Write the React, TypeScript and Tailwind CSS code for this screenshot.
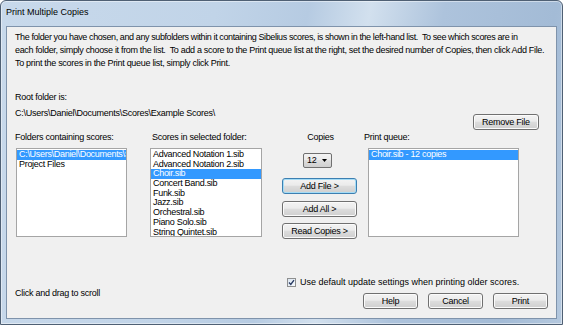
import type { ReactNode } from 'react'

const sans = "font-['Liberation_Sans',Arial,sans-serif]"

function WinButton({ children, className = '', focused = false }: { children: ReactNode; className?: string; focused?: boolean }) {
  return (
    <button
      type="button"
      className={`flex h-[16px] items-center justify-center rounded-[3px] border text-[9px] leading-none text-black bg-[linear-gradient(#f3f3f3_0%,#ebebeb_45%,#dddddd_50%,#cfcfcf_100%)] ${
        focused ? 'border-[#3c7fb1] shadow-[inset_0_0_0_1px_#a4dcf6]' : 'border-[#707070] shadow-[inset_0_0_0_1px_#fbfbfb]'
      } ${className}`}
    >
      {children}
    </button>
  )
}

function ListBox({ items, selected, className = '' }: { items: string[]; selected: number; className?: string }) {
  return (
    <div className={`h-[89px] overflow-hidden border border-[#a5a5a5] bg-white pt-[1px] ${className}`}>
      {items.map((it, i) => (
        <div
          key={i}
          className={`h-[9.7px] whitespace-nowrap pl-[2px] text-[9px] leading-[9.7px] tracking-[-0.3px] ${
            i === selected ? 'bg-[#3399ff] text-white' : 'text-black'
          }`}
        >
          {it}
        </div>
      ))}
    </div>
  )
}

const folders = ['C:\\Users\\Daniel\\Documents\\Scores\\Example Scores\\', 'Project Files']
const scores = [
  'Advanced Notation 1.sib',
  'Advanced Notation 2.sib',
  'Choir.sib',
  'Concert Band.sib',
  'Funk.sib',
  'Jazz.sib',
  'Orchestral.sib',
  'Piano Solo.sib',
  'String Quintet.sib',
]

export default function App() {
  return (
    <div className={`h-[325px] w-[563px] overflow-hidden bg-white ${sans}`}>
      <div className="flex h-full w-full flex-col rounded-t-[6px] border border-[#4f6074] bg-[linear-gradient(100deg,#c8d9eb_0%,#c1d4e8_35%,#b6cbe2_50%,#d2e0ee_60%,#adc3dc_72%,#a3bbd6_90%,#b4c8de_100%)] shadow-[inset_0_0_0_1px_rgba(255,255,255,0.45)]">
        {/* title bar */}
        <div className="flex h-[25px] shrink-0 items-center pb-[1px] pl-[5px] text-[9px] text-black">
          Print Multiple Copies
        </div>

        {/* client area */}
        <div className="mx-[5px] h-[293px] border border-[#7f93ab] bg-[#f0f0f0] text-[9px] tracking-[-0.25px] text-black">
          <div className="whitespace-pre pl-[8px] pt-[3.5px] leading-[13px]">
            <div className="tracking-[-0.4px]">The folder you have chosen, and any subfolders within it containing Sibelius scores, is shown in the left-hand list.  To see which scores are in</div>
            <div className="tracking-[-0.32px]">each folder, simply choose it from the list.  To add a score to the Print queue list at the right, set the desired number of Copies, then click Add File.</div>
            <div className="tracking-[-0.3px]">To print the scores in the Print queue list, simply click Print.</div>
          </div>

          <div className="mt-[19.25px] flex items-start pl-[8px] leading-[16.5px]">
            <div>
              <div>Root folder is:</div>
              <div>C:\Users\Daniel\Documents\Scores\Example Scores\</div>
            </div>
            <WinButton className="mr-[17px] ml-auto mt-[25.25px] w-[66px]">Remove File</WinButton>
          </div>

          <div className="mt-[0.5px] flex whitespace-nowrap pl-[8px]">
            <div className="w-[112px]">
              <div className="h-[13px] leading-[13px]">Folders containing scores:</div>
              <ListBox items={folders} selected={0} className="mt-[4.5px] ml-[1px]" />
            </div>
            <div className="ml-[23px] w-[112px]">
              <div className="h-[13px] pl-[2px] leading-[13px]">Scores in selected folder:</div>
              <ListBox items={scores} selected={2} className="mt-[4.5px]" />
            </div>
            <div className="ml-[20px] flex w-[75px] flex-col items-center">
              <div className="h-[13px] pl-[2px] leading-[13px]">Copies</div>
              <div className="mt-[9.5px] mr-[4px] flex h-[15px] w-[29px] items-center justify-between rounded-[2px] border border-[#707070] bg-[linear-gradient(#f3f3f3_0%,#ebebeb_45%,#dddddd_50%,#cfcfcf_100%)] pl-[3px] pr-[4px] leading-none">
                <span>12</span>
                <svg width="5" height="3" viewBox="0 0 5 3">
                  <polygon points="0,0 5,0 2.5,3" fill="#000" />
                </svg>
              </div>
              <WinButton focused className="mt-[10px] w-[75px]">Add File &gt;</WinButton>
              <WinButton className="mt-[7px] w-[75px]">Add All &gt;</WinButton>
              <WinButton className="mt-[6px] w-[75px]">Read Copies &gt;</WinButton>
            </div>
            <div className="ml-[7px]">
              <div className="h-[13px] leading-[13px]">Print queue:</div>
              <ListBox items={['Choir.sib - 12 copies']} selected={0} className="mt-[4.5px] ml-[4px] w-[151px]" />
            </div>
          </div>

          <div className="mt-[38px] flex h-[10px] items-center pl-[280px]">
            <div className="flex h-[9px] w-[9px] items-center justify-center border border-[#8e8f8f] bg-[linear-gradient(135deg,#dbe5f1,#f7fafd)]">
              <svg width="7" height="7" viewBox="0 0 7 7">
                <path d="M1 3.6 L2.8 5.4 L6 1.2" fill="none" stroke="#2a3b63" strokeWidth="1.4" />
              </svg>
            </div>
            <span className="ml-[4px] leading-[13px] tracking-normal">Use default update settings when printing older scores.</span>
          </div>

          <div className="flex items-start">
            <div className="pl-[8px] leading-[13px]">Click and drag to scroll</div>
            <div className="mt-[6px] mr-[8px] ml-auto flex gap-[10px]">
              <WinButton className="w-[55px]">Help</WinButton>
              <WinButton className="w-[55px]">Cancel</WinButton>
              <WinButton className="w-[55px]">Print</WinButton>
            </div>
          </div>
        </div>
      </div>
    </div>
  )
}
